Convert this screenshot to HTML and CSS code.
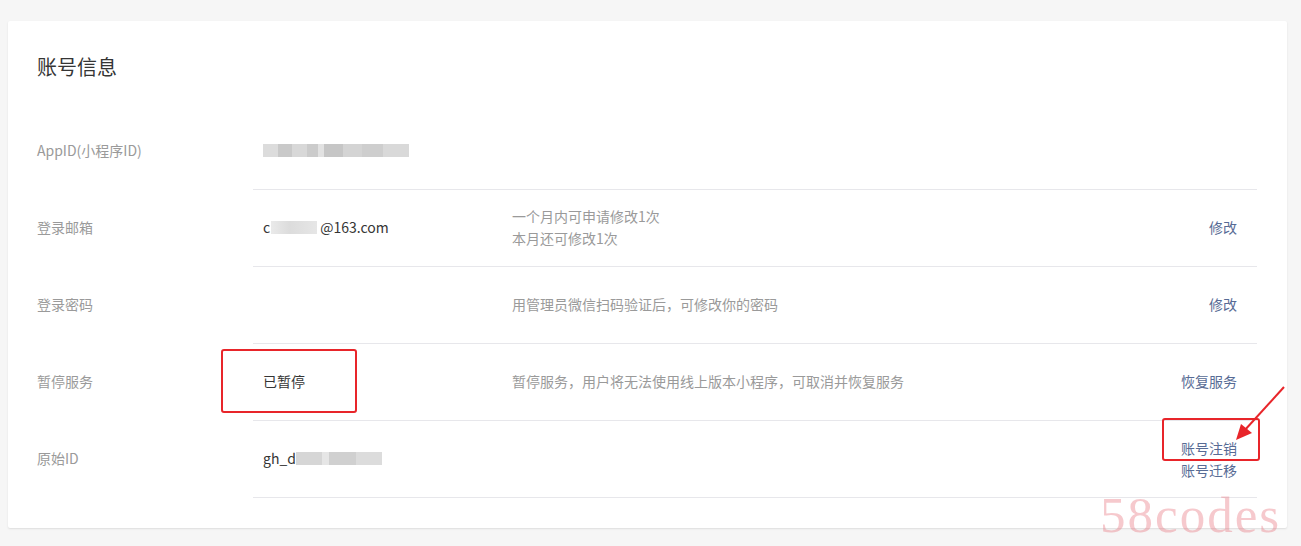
FILE: index.html
```html
<!DOCTYPE html>
<html lang="zh-CN">
<head>
    <meta charset="UTF-8">
    <title>账号信息</title>
    <link rel="stylesheet" href="styles.css">
</head>
<body>
    <div class="card">
        <h2 class="title">账号信息</h2>

        <div class="row">
            <div class="label">AppID(小程序ID)</div>
            <div class="main no-border">
                <div class="value"><span class="blur blur-appid"></span></div>
                <div class="desc"></div>
                <div class="action"></div>
            </div>
        </div>
        <div class="row">
            <div class="label">登录邮箱</div>
            <div class="main">
                <div class="value">c<span class="blur blur-mail"></span>@163.com</div>
                <div class="desc">一个月内可申请修改1次<br>本月还可修改1次</div>
                <div class="action"><a href="#">修改</a></div>
            </div>
        </div>
        <div class="row">
            <div class="label">登录密码</div>
            <div class="main">
                <div class="value"></div>
                <div class="desc">用管理员微信扫码验证后，可修改你的密码</div>
                <div class="action"><a href="#">修改</a></div>
            </div>
        </div>
        <div class="row">
            <div class="label">暂停服务</div>
            <div class="main">
                <div class="value">已暂停</div>
                <div class="desc">暂停服务，用户将无法使用线上版本小程序，可取消并恢复服务</div>
                <div class="action"><a href="#">恢复服务</a></div>
            </div>
        </div>
        <div class="row">
            <div class="label">原始ID</div>
            <div class="main">
                <div class="value">gh_d<span class="blur blur-gh"></span></div>
                <div class="desc"></div>
                <div class="action stack"><a href="#">账号注销</a><a href="#">账号迁移</a></div>
            </div>
        </div>
        <div class="row-end"></div>

        <div class="mark mark-status"></div>
        <div class="mark mark-cancel"></div>
        <svg class="arrow" width="70" height="70" viewBox="0 0 70 70">
            <line x1="66" y1="4" x2="26" y2="48" stroke="#e8252a" stroke-width="2"/>
            <polygon points="18,57 23,41 34,50" fill="#e8252a"/>
        </svg>
    </div>
    <div class="watermark">58codes</div>
</body>
</html>
```

FILE: styles.css
```css
body {
    margin: 0;
    background-color: #f6f6f6;
    font-family: "Noto Sans CJK SC", "Noto Sans", sans-serif;
    font-size: 14px;
    color: #353535;
    height: 546px;
    overflow: hidden;
}
.card {
    position: relative;
    margin: 21px 14px 0 8px;
    height: 507px;
    box-sizing: border-box;
    padding: 32px 30px 0 29px;
    background-color: #fff;
    border-radius: 2px;
    box-shadow: 0 1px 2px rgba(0, 0, 0, 0.1);
}
.title {
    margin: 0 0 31px;
    font-size: 20px;
    font-weight: normal;
    line-height: 28px;
    color: #353535;
}
.row {
    display: flex;
    height: 77px;
}
.label {
    width: 216px;
    flex: none;
    display: flex;
    align-items: center;
    padding-bottom: 2px;
    color: #9a9a9a;
}
.main {
    flex: 1;
    display: flex;
    align-items: center;
    padding: 0 20px 2px 10px;
    border-top: 1px solid #e7e7eb;
}
.main.no-border {
    border-top: 1px solid transparent;
}
.row-end {
    margin-left: 216px;
    border-top: 1px solid #e7e7eb;
}
.value {
    width: 249px;
    flex: none;
    display: flex;
    align-items: center;
}
.desc {
    flex: 1;
    color: #9a9a9a;
    line-height: 22px;
}
.action {
    text-align: right;
}
.action a {
    color: #576b95;
    text-decoration: none;
}
.action.stack {
    display: flex;
    flex-direction: column;
    line-height: 22px;
    margin-top: 1px;
}
.blur {
    display: inline-block;
    height: 13px;
    background: linear-gradient(90deg, #dcdcdc 0 10%, #c9c9c9 10% 20%, #d8d8d8 20% 30%, #cbcbcb 30% 38%, #e2e2e2 38% 42%, #c6c6c6 42% 55%, #d4d4d4 55% 68%, #cecece 68% 82%, #d9d9d9 82% 100%);
}
.blur-appid {
    width: 146px;
}
.blur-mail {
    width: 46px;
    margin: 0 3px 0 1px;
    background: linear-gradient(90deg, #eaeaea, #dcdcdc 40%, #e6e6e6);
}
.blur-gh {
    width: 86px;
    background: linear-gradient(90deg, #d6d6d6 0 30%, #e6e6e6 30% 38%, #d0d0d0 38% 70%, #dcdcdc 70% 100%);
}
.mark {
    position: absolute;
    border: 2px solid #e8252a;
    border-radius: 3px;
}
.mark-status {
    left: 213px;
    top: 328px;
    width: 132px;
    height: 60px;
}
.mark-cancel {
    left: 1154px;
    top: 397px;
    width: 94px;
    height: 39px;
}
.arrow {
    position: absolute;
    left: 1210px;
    top: 362px;
}
.watermark {
    position: absolute;
    left: 1100px;
    top: 486px;
    font-family: "Liberation Serif", serif;
    font-size: 51px;
    color: rgba(232, 120, 130, 0.4);
    letter-spacing: 2px;
}
```
